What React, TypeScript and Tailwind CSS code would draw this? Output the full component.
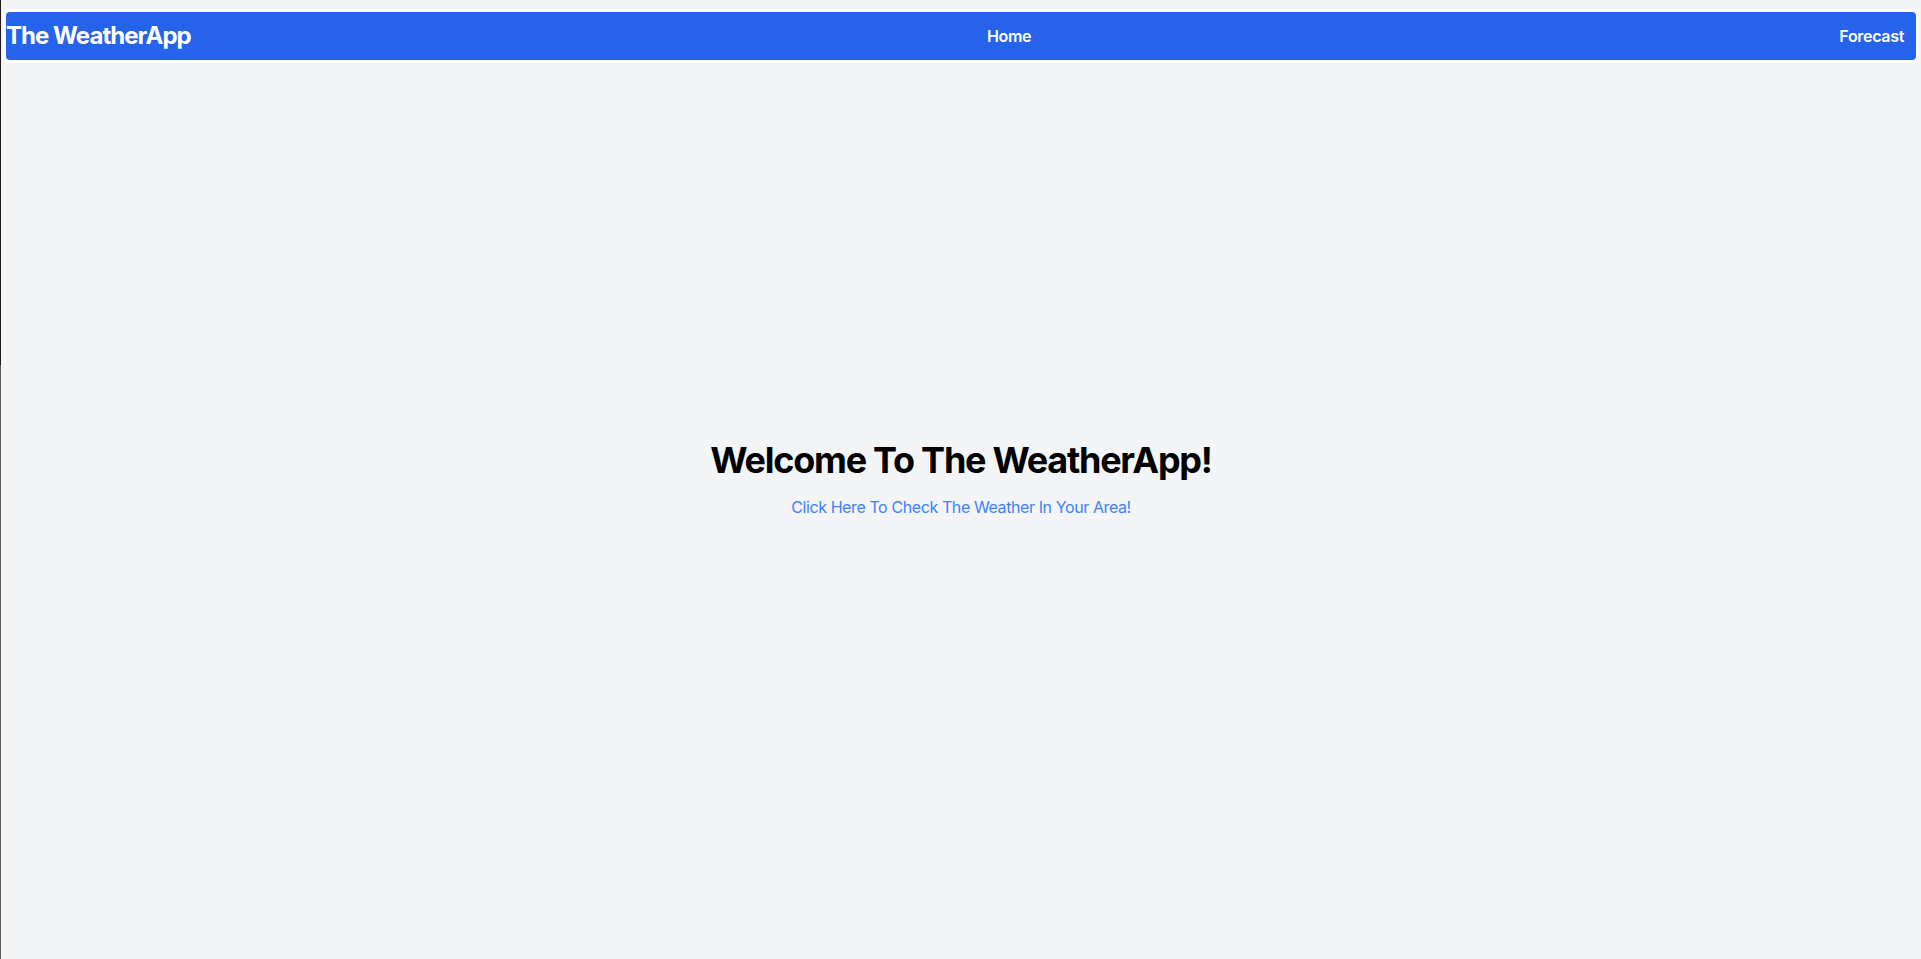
import React from 'react';

const NavBar: React.FC = () => {
  return (
    <div className="mt-[9px] mx-[2px] bg-white rounded-md p-[3px]">
      <nav className="h-12 bg-[#2563eb] rounded-[4px] flex items-center justify-between text-white">
        <a href="#" className="text-2xl font-bold tracking-[-0.04em]">The WeatherApp</a>
        <a href="#" className="px-3 text-base font-semibold tracking-[-0.02em]">Home</a>
        <a href="#" className="px-3 text-base font-semibold tracking-[-0.02em]">Forecast</a>
      </nav>
    </div>
  );
};

const App: React.FC = () => {
  return (
    <div className="h-screen w-full flex bg-[#f3f4f6] font-['Inter',_'Liberation_Sans',_sans-serif] overflow-hidden">
      {/* thin window edge on the left */}
      <div className="w-px flex flex-col">
        <div className="h-[365px] bg-[#1a1a1a]" />
        <div className="flex-1 bg-[#5a5a5a]" />
      </div>

      <div className="flex-1 flex flex-col">
        <NavBar />

        <main className="flex-1 flex flex-col items-center justify-center pb-[63px]">
          <h1 className="text-4xl font-bold text-black tracking-[-0.035em]">Welcome To The WeatherApp!</h1>
          <a href="#" className="mt-[15px] text-base text-[#3b82f6] tracking-[-0.025em]">
            Click Here To Check The Weather In Your Area!
          </a>
        </main>
      </div>
    </div>
  );
};

export default App;
